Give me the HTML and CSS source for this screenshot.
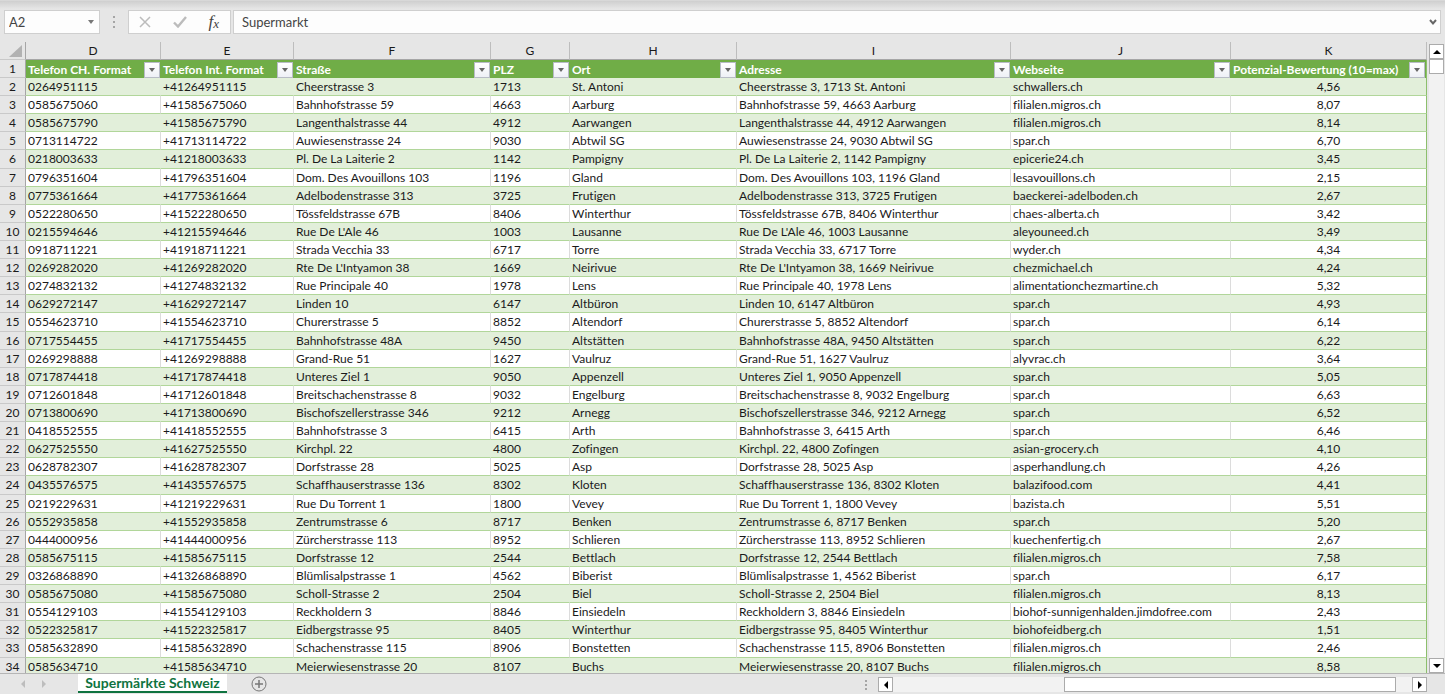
FILE: index.html
```html
<!DOCTYPE html>
<html lang="de">
<head>
<meta charset="utf-8">
<title>Supermärkte Schweiz</title>
<link rel="stylesheet" href="styles.css">
</head>
<body>
<div class="app">
  <header class="formula-bar">
    <div class="name-box">
      <input class="name-input" type="text" value="A2" aria-label="Namenfeld">
      <button class="plain" type="button" aria-label="Namen anzeigen"><svg width="6" height="4" viewBox="0 0 6 4"><path d="M0 0h6L3 4z" fill="#777"/></svg></button>
    </div>
    <span class="grip"><svg width="3" height="12" viewBox="0 0 3 12" fill="#a5a5a5"><path d="M0 0h2v2H0zM0 5h2v2H0zM0 10h2v2H0z"/></svg></span>
    <div class="tools">
      <button class="plain" type="button" aria-label="Abbrechen"><svg width="12" height="12" viewBox="0 0 12 12"><path d="M1 1l10 10M11 1L1 11" stroke="#bcbcbc" stroke-width="1.5" fill="none"/></svg></button>
      <button class="plain" type="button" aria-label="Eingeben"><svg width="14" height="12" viewBox="0 0 14 12"><path d="M1 6.5l4 4L13 1" stroke="#bcbcbc" stroke-width="2.4" fill="none"/></svg></button>
      <button class="plain fx" type="button" aria-label="Funktion einfügen">f<span class="fx-x">x</span></button>
    </div>
    <div class="formula">
      <input class="formula-input" type="text" value="Supermarkt" aria-label="Bearbeitungsleiste">
      <button class="plain" type="button" aria-label="Bearbeitungsleiste erweitern"><svg width="8" height="6" viewBox="0 0 8 6"><path d="M1 1l3 3.4L7 1" stroke="#666" stroke-width="2" fill="none"/></svg></button>
    </div>
  </header>

  <main class="sheet">
    <div class="grid-area">
      <table class="grid">
        <colgroup><col class="c-num"><col class="c-d"><col class="c-e"><col class="c-f"><col class="c-g"><col class="c-h"><col class="c-i"><col class="c-j"><col class="c-k"></colgroup>
        <thead>
          <tr class="letters"><th class="corner"><svg width="13" height="12" viewBox="0 0 13 12"><path d="M13 0v12H0z" fill="#b2b2b2"/></svg></th><th>D</th><th>E</th><th>F</th><th>G</th><th>H</th><th>I</th><th>J</th><th>K</th></tr>
          <tr class="titles"><th>1</th>
            <th><div class="title"><span>Telefon CH. Format</span><button class="filter" type="button" aria-label="Telefon CH. Format filtern"></button></div></th>
            <th><div class="title"><span>Telefon Int. Format</span><button class="filter" type="button" aria-label="Telefon Int. Format filtern"></button></div></th>
            <th><div class="title"><span>Straße</span><button class="filter" type="button" aria-label="Straße filtern"></button></div></th>
            <th><div class="title"><span>PLZ</span><button class="filter" type="button" aria-label="PLZ filtern"></button></div></th>
            <th><div class="title"><span>Ort</span><button class="filter" type="button" aria-label="Ort filtern"></button></div></th>
            <th><div class="title"><span>Adresse</span><button class="filter" type="button" aria-label="Adresse filtern"></button></div></th>
            <th><div class="title"><span>Webseite</span><button class="filter" type="button" aria-label="Webseite filtern"></button></div></th>
            <th><div class="title"><span>Potenzial-Bewertung (10=max)</span><button class="filter" type="button" aria-label="Potenzial-Bewertung filtern"></button></div></th>
          </tr>
        </thead>
        <tbody>
          <tr><th>2</th><td>0264951115</td><td>+41264951115</td><td>Cheerstrasse 3</td><td>1713</td><td>St. Antoni</td><td>Cheerstrasse 3, 1713 St. Antoni</td><td>schwallers.ch</td><td>4,56</td></tr>
          <tr><th>3</th><td>0585675060</td><td>+41585675060</td><td>Bahnhofstrasse 59</td><td>4663</td><td>Aarburg</td><td>Bahnhofstrasse 59, 4663 Aarburg</td><td>filialen.migros.ch</td><td>8,07</td></tr>
          <tr><th>4</th><td>0585675790</td><td>+41585675790</td><td>Langenthalstrasse 44</td><td>4912</td><td>Aarwangen</td><td>Langenthalstrasse 44, 4912 Aarwangen</td><td>filialen.migros.ch</td><td>8,14</td></tr>
          <tr><th>5</th><td>0713114722</td><td>+41713114722</td><td>Auwiesenstrasse 24</td><td>9030</td><td>Abtwil SG</td><td>Auwiesenstrasse 24, 9030 Abtwil SG</td><td>spar.ch</td><td>6,70</td></tr>
          <tr><th>6</th><td>0218003633</td><td>+41218003633</td><td>Pl. De La Laiterie 2</td><td>1142</td><td>Pampigny</td><td>Pl. De La Laiterie 2, 1142 Pampigny</td><td>epicerie24.ch</td><td>3,45</td></tr>
          <tr><th>7</th><td>0796351604</td><td>+41796351604</td><td>Dom. Des Avouillons 103</td><td>1196</td><td>Gland</td><td>Dom. Des Avouillons 103, 1196 Gland</td><td>lesavouillons.ch</td><td>2,15</td></tr>
          <tr><th>8</th><td>0775361664</td><td>+41775361664</td><td>Adelbodenstrasse 313</td><td>3725</td><td>Frutigen</td><td>Adelbodenstrasse 313, 3725 Frutigen</td><td>baeckerei-adelboden.ch</td><td>2,67</td></tr>
          <tr><th>9</th><td>0522280650</td><td>+41522280650</td><td>Tössfeldstrasse 67B</td><td>8406</td><td>Winterthur</td><td>Tössfeldstrasse 67B, 8406 Winterthur</td><td>chaes-alberta.ch</td><td>3,42</td></tr>
          <tr><th>10</th><td>0215594646</td><td>+41215594646</td><td>Rue De L'Ale 46</td><td>1003</td><td>Lausanne</td><td>Rue De L'Ale 46, 1003 Lausanne</td><td>aleyouneed.ch</td><td>3,49</td></tr>
          <tr><th>11</th><td>0918711221</td><td>+41918711221</td><td>Strada Vecchia 33</td><td>6717</td><td>Torre</td><td>Strada Vecchia 33, 6717 Torre</td><td>wyder.ch</td><td>4,34</td></tr>
          <tr><th>12</th><td>0269282020</td><td>+41269282020</td><td>Rte De L'Intyamon 38</td><td>1669</td><td>Neirivue</td><td>Rte De L'Intyamon 38, 1669 Neirivue</td><td>chezmichael.ch</td><td>4,24</td></tr>
          <tr><th>13</th><td>0274832132</td><td>+41274832132</td><td>Rue Principale 40</td><td>1978</td><td>Lens</td><td>Rue Principale 40, 1978 Lens</td><td>alimentationchezmartine.ch</td><td>5,32</td></tr>
          <tr><th>14</th><td>0629272147</td><td>+41629272147</td><td>Linden 10</td><td>6147</td><td>Altbüron</td><td>Linden 10, 6147 Altbüron</td><td>spar.ch</td><td>4,93</td></tr>
          <tr><th>15</th><td>0554623710</td><td>+41554623710</td><td>Churerstrasse 5</td><td>8852</td><td>Altendorf</td><td>Churerstrasse 5, 8852 Altendorf</td><td>spar.ch</td><td>6,14</td></tr>
          <tr><th>16</th><td>0717554455</td><td>+41717554455</td><td>Bahnhofstrasse 48A</td><td>9450</td><td>Altstätten</td><td>Bahnhofstrasse 48A, 9450 Altstätten</td><td>spar.ch</td><td>6,22</td></tr>
          <tr><th>17</th><td>0269298888</td><td>+41269298888</td><td>Grand-Rue 51</td><td>1627</td><td>Vaulruz</td><td>Grand-Rue 51, 1627 Vaulruz</td><td>alyvrac.ch</td><td>3,64</td></tr>
          <tr><th>18</th><td>0717874418</td><td>+41717874418</td><td>Unteres Ziel 1</td><td>9050</td><td>Appenzell</td><td>Unteres Ziel 1, 9050 Appenzell</td><td>spar.ch</td><td>5,05</td></tr>
          <tr><th>19</th><td>0712601848</td><td>+41712601848</td><td>Breitschachenstrasse 8</td><td>9032</td><td>Engelburg</td><td>Breitschachenstrasse 8, 9032 Engelburg</td><td>spar.ch</td><td>6,63</td></tr>
          <tr><th>20</th><td>0713800690</td><td>+41713800690</td><td>Bischofszellerstrasse 346</td><td>9212</td><td>Arnegg</td><td>Bischofszellerstrasse 346, 9212 Arnegg</td><td>spar.ch</td><td>6,52</td></tr>
          <tr><th>21</th><td>0418552555</td><td>+41418552555</td><td>Bahnhofstrasse 3</td><td>6415</td><td>Arth</td><td>Bahnhofstrasse 3, 6415 Arth</td><td>spar.ch</td><td>6,46</td></tr>
          <tr><th>22</th><td>0627525550</td><td>+41627525550</td><td>Kirchpl. 22</td><td>4800</td><td>Zofingen</td><td>Kirchpl. 22, 4800 Zofingen</td><td>asian-grocery.ch</td><td>4,10</td></tr>
          <tr><th>23</th><td>0628782307</td><td>+41628782307</td><td>Dorfstrasse 28</td><td>5025</td><td>Asp</td><td>Dorfstrasse 28, 5025 Asp</td><td>asperhandlung.ch</td><td>4,26</td></tr>
          <tr><th>24</th><td>0435576575</td><td>+41435576575</td><td>Schaffhauserstrasse 136</td><td>8302</td><td>Kloten</td><td>Schaffhauserstrasse 136, 8302 Kloten</td><td>balazifood.com</td><td>4,41</td></tr>
          <tr><th>25</th><td>0219229631</td><td>+41219229631</td><td>Rue Du Torrent 1</td><td>1800</td><td>Vevey</td><td>Rue Du Torrent 1, 1800 Vevey</td><td>bazista.ch</td><td>5,51</td></tr>
          <tr><th>26</th><td>0552935858</td><td>+41552935858</td><td>Zentrumstrasse 6</td><td>8717</td><td>Benken</td><td>Zentrumstrasse 6, 8717 Benken</td><td>spar.ch</td><td>5,20</td></tr>
          <tr><th>27</th><td>0444000956</td><td>+41444000956</td><td>Zürcherstrasse 113</td><td>8952</td><td>Schlieren</td><td>Zürcherstrasse 113, 8952 Schlieren</td><td>kuechenfertig.ch</td><td>2,67</td></tr>
          <tr><th>28</th><td>0585675115</td><td>+41585675115</td><td>Dorfstrasse 12</td><td>2544</td><td>Bettlach</td><td>Dorfstrasse 12, 2544 Bettlach</td><td>filialen.migros.ch</td><td>7,58</td></tr>
          <tr><th>29</th><td>0326868890</td><td>+41326868890</td><td>Blümlisalpstrasse 1</td><td>4562</td><td>Biberist</td><td>Blümlisalpstrasse 1, 4562 Biberist</td><td>spar.ch</td><td>6,17</td></tr>
          <tr><th>30</th><td>0585675080</td><td>+41585675080</td><td>Scholl-Strasse 2</td><td>2504</td><td>Biel</td><td>Scholl-Strasse 2, 2504 Biel</td><td>filialen.migros.ch</td><td>8,13</td></tr>
          <tr><th>31</th><td>0554129103</td><td>+41554129103</td><td>Reckholdern 3</td><td>8846</td><td>Einsiedeln</td><td>Reckholdern 3, 8846 Einsiedeln</td><td>biohof-sunnigenhalden.jimdofree.com</td><td>2,43</td></tr>
          <tr><th>32</th><td>0522325817</td><td>+41522325817</td><td>Eidbergstrasse 95</td><td>8405</td><td>Winterthur</td><td>Eidbergstrasse 95, 8405 Winterthur</td><td>biohofeidberg.ch</td><td>1,51</td></tr>
          <tr><th>33</th><td>0585632890</td><td>+41585632890</td><td>Schachenstrasse 115</td><td>8906</td><td>Bonstetten</td><td>Schachenstrasse 115, 8906 Bonstetten</td><td>filialen.migros.ch</td><td>2,46</td></tr>
          <tr><th>34</th><td>0585634710</td><td>+41585634710</td><td>Meierwiesenstrasse 20</td><td>8107</td><td>Buchs</td><td>Meierwiesenstrasse 20, 8107 Buchs</td><td>filialen.migros.ch</td><td>8,58</td></tr>
        </tbody>
      </table>
    </div>
    <div class="v-scroll">
      <button class="scroll-btn" type="button" aria-label="Nach oben"><svg width="8" height="4" viewBox="0 0 8 4"><path d="M4 0l4 4H0z"/></svg></button>
      <div class="v-track"><div class="v-thumb"></div></div>
      <button class="scroll-btn" type="button" aria-label="Nach unten"><svg width="8" height="4" viewBox="0 0 8 4"><path d="M0 0h8L4 4z"/></svg></button>
    </div>
  </main>

  <footer class="tab-bar">
    <div class="tab-nav">
      <button class="plain" type="button" aria-label="Vorheriges Blatt"><svg width="4" height="8" viewBox="0 0 4 8"><path d="M4 0v8L0 4z" fill="#bdbdbd"/></svg></button>
      <button class="plain" type="button" aria-label="Nächstes Blatt"><svg width="4" height="8" viewBox="0 0 4 8"><path d="M0 0l4 4-4 4z" fill="#bdbdbd"/></svg></button>
    </div>
    <button class="tab" type="button">Supermärkte Schweiz</button>
    <button class="plain add" type="button" aria-label="Neues Blatt"><svg width="16" height="16" viewBox="0 0 16 16" fill="none" stroke="#777"><circle cx="8" cy="8" r="7"/><path d="M8 4v8M4 8h8" stroke-width="1.5"/></svg></button>
    <div class="h-scroll">
      <span class="grip-small"><svg width="2" height="10" viewBox="0 0 2 10" fill="#a5a5a5"><path d="M0 0h2v2H0zM0 4h2v2H0zM0 8h2v2H0z"/></svg></span>
      <button class="scroll-btn" type="button" aria-label="Nach links"><svg width="4" height="8" viewBox="0 0 4 8"><path d="M4 0v8L0 4z"/></svg></button>
      <div class="h-track"><div class="h-thumb"></div></div>
      <button class="scroll-btn" type="button" aria-label="Nach rechts"><svg width="4" height="8" viewBox="0 0 4 8"><path d="M0 0l4 4-4 4z"/></svg></button>
    </div>
  </footer>
</div>
</body>
</html>
```
FILE: styles.css
```css
* { box-sizing: border-box; }

body {
  margin: 0;
  font: 12px/16px Lato, "Noto Sans", sans-serif;
  font-variant-ligatures: none;
  color: #1a1a1a;
  background: #e6e6e6;
}

button, input { font: inherit; color: inherit; margin: 0; }
svg { display: block; }

.app { display: flex; flex-direction: column; height: 100vh; overflow: hidden; }

.plain {
  display: flex;
  align-items: center;
  justify-content: center;
  padding: 0;
  border: 0;
  background: none;
}

/* Formula bar */
.formula-bar {
  display: flex;
  padding: 9px 4px 8px;
  border-top: 1px solid #d8d8d8;
  background: linear-gradient(#cfcfcf, #e6e6e6 8px);
}
.name-box, .tools, .formula {
  display: flex;
  align-items: center;
  height: 24px;
  border: 1px solid #cfcfcf;
  background: #fdfdfd;
  color: #444;
  font-size: 13px;
}
.name-box { width: 96px; padding-right: 5px; }
.name-input, .formula-input {
  flex: 1;
  min-width: 0;
  padding: 0 4px;
  border: 0;
  outline: 0;
  background: none;
}
.formula-input { padding: 0 8px; }
.grip { display: flex; align-items: center; justify-content: center; width: 28px; }
.tools { width: 103px; justify-content: space-between; padding: 0 11px 0 10px; margin-right: 2px; }
.fx { font: italic 17px/16px "Liberation Serif", serif; color: #444; }
.fx-x { font-size: 13px; padding-top: 3px; }
.formula { flex: 1; padding-right: 3px; }

/* Sheet */
.sheet { flex: 1; display: flex; min-height: 0; border-bottom: 1px solid #b5b5b5; }
.grid-area { flex: 1; min-width: 0; overflow: hidden; }
.grid {
  width: 100%;
  height: calc(100% + 3px);
  table-layout: fixed;
  border-collapse: separate;
  border-spacing: 0;
}
.c-num { width: 26px; }
.c-d { width: 135px; }
.c-e { width: 133px; }
.c-f { width: 197px; }
.c-g { width: 79px; }
.c-h { width: 167px; }
.c-i { width: 274px; }
.c-j { width: 220px; }

.grid th, .grid td {
  height: 18px;
  padding: 1px 2px 0;
  line-height: 16px;
  white-space: nowrap;
  text-align: left;
}
.grid .letters th {
  text-align: center;
  font-weight: 400;
  border-right: 1px solid #bdbdbd;
  border-bottom: 1px solid #a6a6a6;
}
.grid .letters .corner { border-bottom-color: #c9c9c9; padding: 2px 2px 2px 9px; }
.grid tr > th:first-child {
  text-align: center;
  font-weight: 400;
  border-right: 1px solid #a6a6a6;
  border-bottom: 1px solid #c9c9c9;
}
.grid .titles th:not(:first-child) {
  padding: 1px 0 0 2px;
  background: #70ad47;
  color: #fff;
  font-weight: 700;
}
.grid .titles th:last-child { border-right: 1px solid #8cbf6c; }
.title { display: flex; align-items: center; justify-content: space-between; }
.filter {
  flex: none;
  width: 16px;
  height: 16px;
  margin-right: 1px;
  padding: 0;
  border: 1px solid #b8bcc6;
  background: linear-gradient(#fff, #eef0f6);
  display: flex;
  align-items: center;
  justify-content: center;
}
.filter::before {
  content: "";
  border: 3px solid transparent;
  border-top: 4px solid #666;
  border-bottom: 0;
}
.grid td { border-bottom: 1px solid #b1d69a; background: #fff; border-right: 1px solid #dcdcdc; }
.grid tbody tr:nth-child(odd) td { background: #e2efda; border-right-color: #e2efda; }
.grid tbody tr td:last-child { text-align: center; border-right-color: #8cbf6c; }

/* Scroll bars */
.scroll-btn {
  flex: none;
  display: flex;
  align-items: center;
  justify-content: center;
  width: 15px;
  height: 15px;
  padding: 0;
  border: 1px solid #ababab;
  background: #fff;
}
.v-scroll { flex: none; display: flex; flex-direction: column; width: 18px; padding: 2px 1px 0 2px; }
.v-track { flex: 1; background: #f2f2f2; width: 15px; }
.v-thumb { height: 15px; border: 1px solid #ababab; background: #fff; }

/* Sheet tabs */
.tab-bar { display: flex; height: 20px; }
.tab-nav { display: flex; width: 78px; padding: 0 32px 0 21px; justify-content: space-between; }
.tab {
  height: 19px;
  width: 149px;
  padding: 0;
  border: 0;
  border-bottom: 2px solid #0f7340;
  background: #fff;
  color: #0f7340;
  font-weight: 700;
  font-size: 14px;
  line-height: 16px;
}
.add { margin-left: 24px; }
.h-scroll { display: flex; align-items: flex-start; width: 580px; margin-left: auto; padding: 3px 18px 0 0; }
.grip-small { width: 13px; padding-top: 3px; }
.h-track { flex: 1; height: 15px; background: #f2f2f2; }
.h-thumb { width: 64%; height: 15px; margin-left: 33%; border: 1px solid #ababab; background: #fff; }
```
